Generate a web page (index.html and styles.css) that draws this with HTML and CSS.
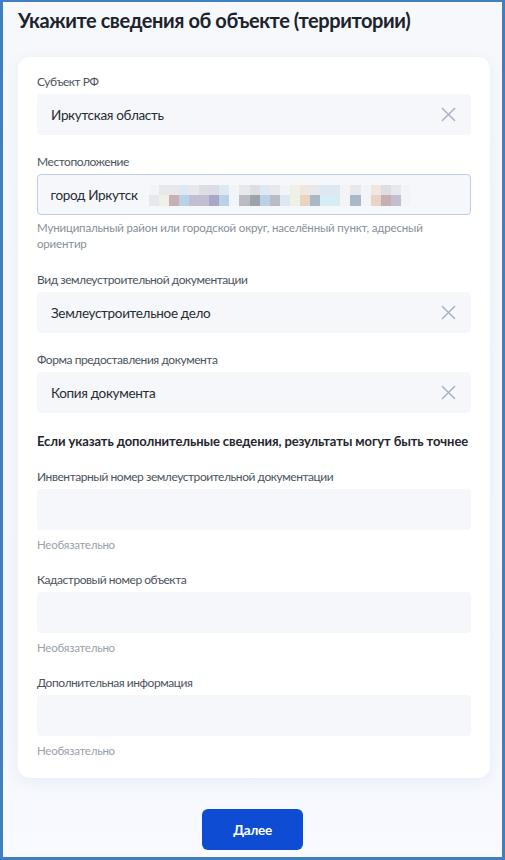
FILE: index.html
```html
<!DOCTYPE html>
<html lang="ru">
<head>
<meta charset="utf-8">
<title>Сведения об объекте</title>
<link rel="stylesheet" href="styles.css">
</head>
<body>
<div class="frame">
  <h1 class="title">Укажите сведения об объекте (территории)</h1>

  <form class="card">
    <div class="field">
      <label class="label">Субъект РФ</label>
      <div class="input">
        <span class="value">Иркутская область</span>
        <svg class="clear" viewBox="0 0 16 16" aria-hidden="true"><path d="M1.5 1.5 14.5 14.5M14.5 1.5 1.5 14.5"/></svg>
      </div>
    </div>

    <div class="field">
      <label class="label">Местоположение</label>
      <div class="input input--focus">
        <span class="value">город Иркутск</span>
        <span class="mosaic" aria-hidden="true">
          <i class="w"></i><i class="g0"></i><i class="g0"></i><i class="b0"></i><i class="g0"></i><i class="g1"></i><i class="p0"></i><i class="b0"></i><i class="w"></i><i class="g0"></i><i class="g1"></i><i class="b0"></i><i class="g0"></i><i class="w"></i><i class="y"></i><i class="c0"></i><i class="g0"></i><i class="b0"></i><i class="b0"></i><i class="w"></i><i class="g0"></i><i class="w"></i><i class="c0"></i><i class="g1"></i><i class="g0"></i><i class="w"></i>
          <i class="g0"></i><i class="y"></i><i class="m"></i><i class="b1"></i><i class="p1"></i><i class="p1"></i><i class="p2"></i><i class="b1"></i><i class="w"></i><i class="g2"></i><i class="g3"></i><i class="b1"></i><i class="g2"></i><i class="b0"></i><i class="y"></i><i class="c1"></i><i class="s"></i><i class="cy"></i><i class="cy"></i><i class="w"></i><i class="s"></i><i class="w"></i><i class="c1"></i><i class="m"></i><i class="p1"></i><i class="w"></i>
        </span>
      </div>
      <p class="hint">Муниципальный район или городской округ, населённый пункт, адресный ориентир</p>
    </div>

    <div class="field">
      <label class="label">Вид землеустроительной документации</label>
      <div class="input">
        <span class="value">Землеустроительное дело</span>
        <svg class="clear" viewBox="0 0 16 16" aria-hidden="true"><path d="M1.5 1.5 14.5 14.5M14.5 1.5 1.5 14.5"/></svg>
      </div>
    </div>

    <div class="field">
      <label class="label">Форма предоставления документа</label>
      <div class="input">
        <span class="value">Копия документа</span>
        <svg class="clear" viewBox="0 0 16 16" aria-hidden="true"><path d="M1.5 1.5 14.5 14.5M14.5 1.5 1.5 14.5"/></svg>
      </div>
    </div>

    <h2 class="subtitle">Если указать дополнительные сведения, результаты могут быть точнее</h2>

    <div class="field">
      <label class="label">Инвентарный номер землеустроительной документации</label>
      <div class="input"></div>
      <p class="optional">Необязательно</p>
    </div>

    <div class="field">
      <label class="label">Кадастровый номер объекта</label>
      <div class="input"></div>
      <p class="optional">Необязательно</p>
    </div>

    <div class="field">
      <label class="label">Дополнительная информация</label>
      <div class="input"></div>
      <p class="optional">Необязательно</p>
    </div>
  </form>

  <div class="actions">
    <button class="btn" type="button">Далее</button>
  </div>
</div>
</body>
</html>
```

FILE: styles.css
```css
* {
  box-sizing: border-box;
}

html, body {
  margin: 0;
  padding: 0;
}

body {
  font-family: Lato, "Noto Sans", sans-serif;
  color: #1f2630;
  background: #ffffff;
}

.frame {
  width: 505px;
  height: 860px;
  border-style: solid;
  border-color: #417fc0;
  border-width: 2px 3px 3px 3px;
  background: linear-gradient(180deg, #f6f8fc 0%, #f4f7fc 85%, #f8faff 100%);
  padding: 0 12px 0 15px;
  overflow: hidden;
}

.title {
  margin: 6px 0 0;
  font-size: 20px;
  line-height: 24px;
  font-weight: 700;
  color: #1c232c;
  letter-spacing: -0.42px;
}

.card {
  margin: 25px 0 0;
  background: #ffffff;
  border-radius: 12px;
  box-shadow: 0 3px 14px rgba(40, 80, 160, 0.07);
  padding: 17px 19px 19px;
  display: flex;
  flex-direction: column;
}

.field {
  display: flex;
  flex-direction: column;
}

.field + .field {
  margin-top: 19px;
}

.subtitle + .field {
  margin-top: 19px;
}

.field:has(.optional) + .field {
  margin-top: 19px;
}

.field:has(.hint) + .field {
  margin-top: 20px;
}

.label {
  font-size: 12px;
  line-height: 16px;
  letter-spacing: -0.45px;
  color: #4b535d;
  margin-bottom: 4px;
}

.input {
  height: 41px;
  background: #f5f7fa;
  border-radius: 4px;
  display: flex;
  align-items: center;
  padding: 0 15px 0 14px;
}

.input--focus {
  border: 1.5px solid #bccbef;
  padding-left: 12.5px;
}

.value {
  font-size: 13.5px;
  letter-spacing: -0.33px;
  color: #262c33;
  white-space: nowrap;
}

.clear {
  margin-left: auto;
  width: 15px;
  height: 15px;
  fill: none;
  stroke: #a8b1c6;
  stroke-width: 1.6;
  stroke-linecap: round;
}

/* blurred remainder of the address */
.mosaic {
  display: grid;
  grid-template-columns: repeat(26, 10.1px);
  grid-template-rows: 10px 11px;
  margin-left: 11px;
  margin-top: 1px;
}

.mosaic i { display: block; }
.mosaic .w  { background: #f2f4f7; }
.mosaic .g0 { background: #e6e8ec; }
.mosaic .g1 { background: #dcdee4; }
.mosaic .g2 { background: #b9bcc2; }
.mosaic .g3 { background: #9ca3aa; }
.mosaic .b0 { background: #dde8f2; }
.mosaic .b1 { background: #b8d2e8; }
.mosaic .p0 { background: #dcdbe8; }
.mosaic .p1 { background: #c1bfd1; }
.mosaic .p2 { background: #a8a7c8; }
.mosaic .m  { background: #c7b0b4; }
.mosaic .c0 { background: #f1e6de; }
.mosaic .c1 { background: #e8d3c4; }
.mosaic .s  { background: #a8b8c6; }
.mosaic .cy { background: #d8edf3; }
.mosaic .y  { background: #eff1e6; }

.hint {
  margin: 5px 0 0;
  font-size: 11.5px;
  line-height: 16px;
  letter-spacing: -0.17px;
  color: #878f99;
  padding-right: 20px;
}

.subtitle {
  margin: 19px 0 0;
  font-size: 13px;
  line-height: 18px;
  font-weight: 700;
  letter-spacing: -0.1px;
  color: #1f2630;
}

.optional {
  margin: 7px 0 0;
  font-size: 11.5px;
  line-height: 16px;
  letter-spacing: -0.25px;
  color: #9aa1aa;
}

.actions {
  display: flex;
  justify-content: center;
  margin-top: 31px;
  padding-right: 3px;
}

.btn {
  width: 101px;
  height: 41px;
  border: none;
  border-radius: 6px;
  background: #0d4cd3;
  color: #ffffff;
  font-family: Lato, "Noto Sans", sans-serif;
  font-size: 13.5px;
  font-weight: 700;
  letter-spacing: -0.3px;
}
```
